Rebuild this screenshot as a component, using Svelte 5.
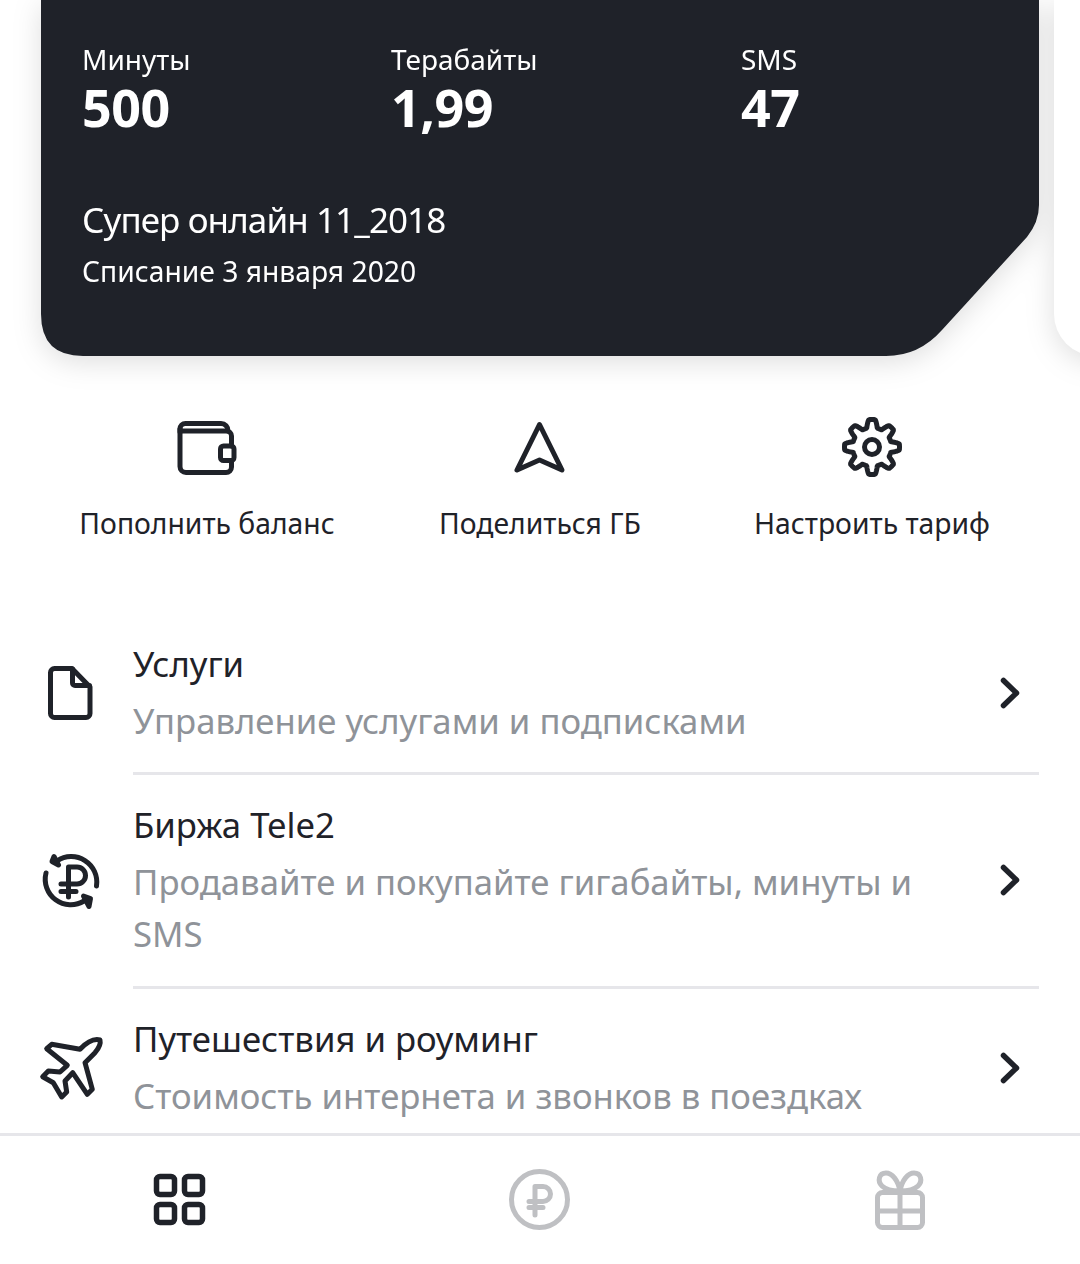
<script lang="ts">
  const stats = [
    { label: 'Минуты', value: '500' },
    { label: 'Терабайты', value: '1,99' },
    { label: 'SMS', value: '47' },
  ];

  // gear outline, 8 soft teeth
  function gearPath() {
    const pts: string[] = [];
    for (let i = 0; i < 240; i++) {
      const a = (i / 240) * Math.PI * 2;
      const c = Math.max(-1, Math.min(1, 1.7 * Math.cos(8 * (a + Math.PI / 2))));
      const r = 23.5 + 4 * c;
      pts.push(`${(30 + r * Math.cos(a)).toFixed(2)} ${(28 + r * Math.sin(a)).toFixed(2)}`);
    }
    return 'M' + pts.join('L') + 'Z';
  }
</script>

<div class="screen">
  <div class="carousel">
    <section class="card">
      <div class="stats">
        {#each stats as s}
          <div class="stat">
            <span class="stat-label">{s.label}</span>
            <span class="stat-value">{s.value}</span>
          </div>
        {/each}
      </div>
      <div class="plan">Супер онлайн 11_2018</div>
      <div class="charge">Списание 3 января 2020</div>
    </section>
    <div class="next-card"></div>
  </div>

  <div class="actions">
    <div class="action a1">
      <svg class="icon" viewBox="0 0 60 60">
        <path d="M3 13V10a5.500 5.500 0 0 1 5.500-5.500H44a7 7 0 0 1 7 7.500" />
        <path d="M3 10v37.500a6 6 0 0 0 6 6h40a5.500 5.500 0 0 0 5.500-5.500V42M54.500 27V17a5 5 0 0 0-5-5H6" />
        <rect x="43.500" y="27" width="13.500" height="14.500" rx="3" />
      </svg>
      <span>Пополнить баланс</span>
    </div>
    <div class="action a2">
      <svg class="icon" viewBox="0 0 60 60">
        <path d="M29.500 5.500 7 51l22.500-10L52 51Z" />
      </svg>
      <span>Поделиться ГБ</span>
    </div>
    <div class="action a3">
      <svg class="icon" viewBox="0 0 60 60">
        <path d={gearPath()} />
        <circle cx="30" cy="28" r="7.500" />
      </svg>
      <span>Настроить тариф</span>
    </div>
  </div>

  <div class="list">
    <div class="row">
      <svg class="icon" viewBox="0 0 60 60">
        <path d="M13.500 3.500H31L49 22v26.500a4 4 0 0 1-4 4H13.500a4 4 0 0 1-4-4v-41a4 4 0 0 1 4-4Z" />
        <path d="M31.500 4v14a2.500 2.500 0 0 0 2.500 2.500h14.500" />
      </svg>
      <div class="row-body">
        <div class="row-text">
          <div class="row-title">Услуги</div>
          <div class="row-sub">Управление услугами и подписками</div>
        </div>
        <svg class="chev" viewBox="0 0 24 36"><path d="M5.500 5.500 18.500 18 5.500 30.500" /></svg>
      </div>
    </div>
    <div class="row">
      <svg class="icon" viewBox="0 0 60 60">
        <path d="M55.500 34A25.500 25.500 0 0 0 16 9" />
        <path d="M5 21a25.500 25.500 0 0 0 38 28" />
        <path class="fill" d="M11 9.500 13 4.500 17.500 13Z" />
        <path class="fill" d="M49.500 46.500 42.500 44 48 54.500Z" />
        <path d="M27.500 45V15H36a8.500 8.500 0 0 1 0 17H20M20 39.500H35" />
      </svg>
      <div class="row-body">
        <div class="row-text">
          <div class="row-title">Биржа Tele2</div>
          <div class="row-sub">Продавайте и покупайте гигабайты, минуты и SMS</div>
        </div>
        <svg class="chev" viewBox="0 0 24 36"><path d="M5.500 5.500 18.500 18 5.500 30.500" /></svg>
      </div>
    </div>
    <div class="row">
      <svg class="icon" viewBox="0 0 60 60">
        <path d="M59 2C52 0 45 5 39 11.300L10.700 6.300 5.700 10.700 26.300 27.300 19 34 7.300 33 1.700 38.700 12.300 44.700 20.700 59 25.700 54 24 43 31.700 34.700 46.300 56.300 51.300 51.300 44 24.700 54 14.700C58 10 60 6 59 2Z" />
      </svg>
      <div class="row-body">
        <div class="row-text">
          <div class="row-title">Путешествия и роуминг</div>
          <div class="row-sub">Стоимость интернета и звонков в поездках</div>
        </div>
        <svg class="chev" viewBox="0 0 24 36"><path d="M5.500 5.500 18.500 18 5.500 30.500" /></svg>
      </div>
    </div>
  </div>

  <nav class="tabs">
    <svg class="icon grid-icon" viewBox="0 0 60 60">
      <rect x="6.500" y="6.500" width="18" height="18" rx="3.500" />
      <rect x="34.500" y="6.500" width="18" height="18" rx="3.500" />
      <rect x="6.500" y="34.500" width="18" height="18" rx="3.500" />
      <rect x="34.500" y="34.500" width="18" height="18" rx="3.500" />
    </svg>
    <svg class="icon off" viewBox="0 0 60 60">
      <circle cx="29.500" cy="29.500" r="28" />
      <path d="M25 45V16.500H33a7.500 7.500 0 0 1 0 15H19M19 37.500H33" />
    </svg>
    <svg class="icon off" viewBox="0 0 60 60">
      <rect x="7.500" y="22.500" width="45" height="35" rx="5" />
      <path d="M30 22v35M8 41h44" />
      <path d="M30 21C28 10 22 3 16 3 9 3 7 11 12 16c3 3 8 5 18 5ZM30 21C32 10 38 3 44 3 51 3 53 11 48 16c-3 3-8 5-18 5Z" />
    </svg>
  </nav>
</div>

<style>
  :global(body) {
    background: #fff;
  }

  .screen {
    width: 1080px;
    height: 1264px;
    display: flex;
    flex-direction: column;
    overflow: hidden;
    background: #fff;
    color: #1f2229;
    font-family: "Noto Sans", sans-serif;
  }

  .carousel {
    display: flex;
    flex: none;
    gap: 15px;
    height: 356px;
    padding-left: 41px;
    filter: drop-shadow(0 6px 14px rgba(0, 0, 0, 0.13));
  }

  .card {
    flex: none;
    box-sizing: border-box;
    width: 998px;
    height: 356px;
    padding: 38px 41px 0;
    background: #1f2229;
    color: #fff;
    clip-path: path("M0 0H998V205Q998 222 986 237L901 330Q878 356 845 356H42Q0 356 0 314Z");
  }

  .next-card {
    flex: none;
    width: 400px;
    height: 356px;
    background: #fff;
    border-bottom-left-radius: 42px;
  }

  .stats {
    display: grid;
    grid-template-columns: 309px 350px 1fr;
  }

  .stat {
    display: flex;
    flex-direction: column;
  }

  .stat-label {
    font-size: 28px;
    line-height: 42px;
  }

  .stat-value {
    font-size: 52px;
    line-height: 54px;
    font-weight: 700;
    letter-spacing: -0.5px;
  }

  .plan {
    margin-top: 61px;
    font-size: 35px;
    line-height: 50px;
    letter-spacing: -0.9px;
  }

  .charge {
    margin-top: 5px;
    font-size: 28.250px;
    line-height: 42px;
  }

  .actions {
    flex: none;
    display: grid;
    grid-template-columns: 360px 360px 360px;
    padding-top: 63px;
  }

  .action {
    display: flex;
    flex-direction: column;
    align-items: center;
    gap: 23px;
    font-size: 28.300px;
    line-height: 42px;
  }

  .a1 { transform: translateX(27px); }
  .a3 { transform: translateX(-28px); }

  .icon {
    flex: none;
    width: 60px;
    height: 60px;
    overflow: visible;
    fill: none;
    stroke: #1f2229;
    stroke-width: 5;
    stroke-linejoin: round;
    stroke-linecap: round;
  }

  .grid-icon {
    stroke-width: 5.500;
  }

  .fill {
    fill: #1f2229;
  }

  .list {
    flex: 1;
    min-height: 0;
    overflow: hidden;
    padding: 70px 41px 0;
  }

  .row {
    display: flex;
    align-items: center;
    gap: 32px;
  }

  .row-body {
    flex: 1;
    min-width: 0;
    display: flex;
    align-items: center;
    justify-content: space-between;
    padding: 24px 17px 25px 0;
    border-bottom: 3px solid #e6e6ea;
  }

  .row:nth-child(2) .row-body {
    padding-bottom: 26px;
  }

  .row:last-child .row-body {
    border-bottom: none;
  }

  .row-text {
    width: 800px;
  }

  .row-title {
    font-size: 34.700px;
    line-height: 52px;
  }

  .row-sub {
    margin-top: 5px;
    font-size: 34.700px;
    line-height: 52px;
    color: #8f9399;
  }

  .chev {
    flex: none;
    width: 24px;
    height: 36px;
    fill: none;
    stroke: #1f2229;
    stroke-width: 5.500;
    stroke-linecap: round;
    stroke-linejoin: round;
  }

  .tabs {
    flex: none;
    box-sizing: border-box;
    height: 131px;
    display: grid;
    grid-template-columns: repeat(3, 360px);
    justify-items: center;
    align-items: start;
    padding-top: 34px;
    background: #fff;
    border-top: 3px solid #e6e6ea;
  }

  .off {
    stroke: #bfc0c3;
  }
</style>
